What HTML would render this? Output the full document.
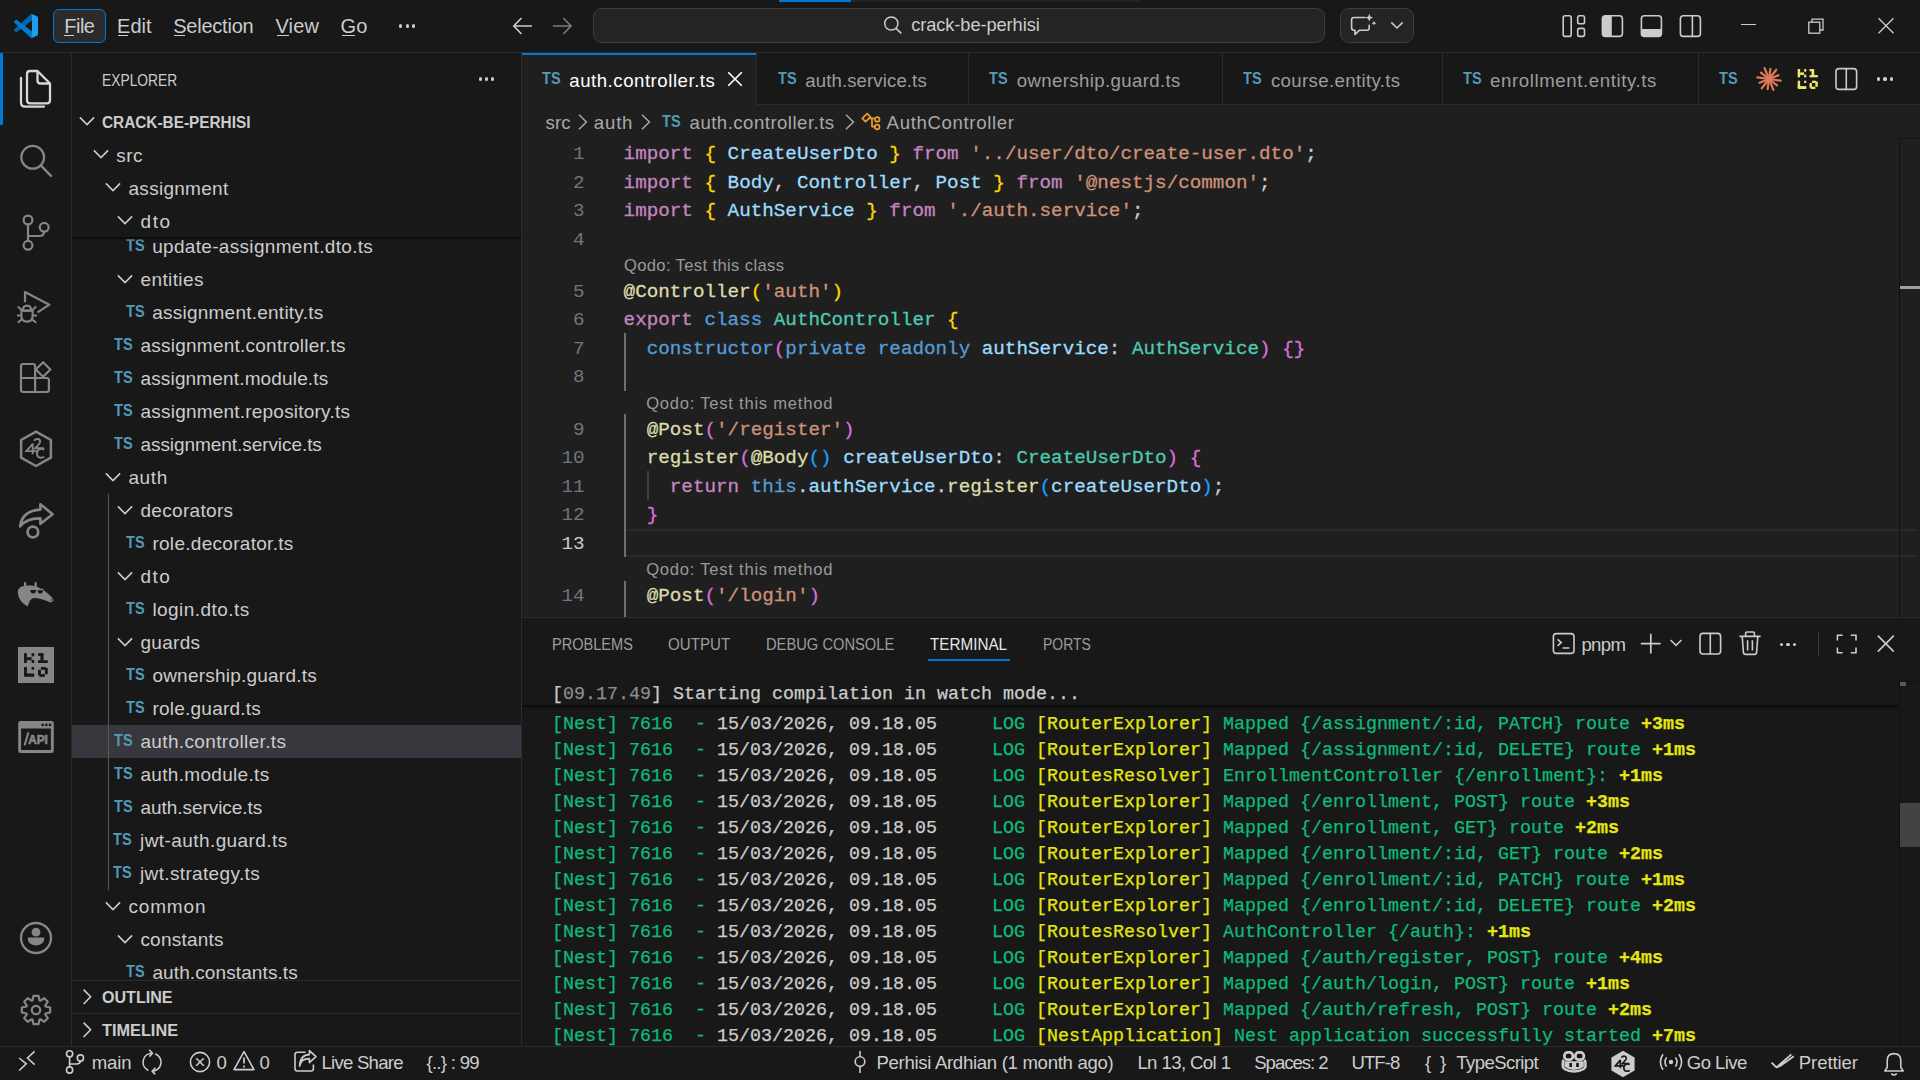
<!DOCTYPE html>
<html><head><meta charset="utf-8"><title>VS Code</title><style>*{margin:0;padding:0;box-sizing:border-box}
html,body{width:1920px;height:1080px;overflow:hidden;background:#181818}
body{position:relative;font-family:"Liberation Sans", sans-serif}
.a{position:absolute;display:block}
.t{position:absolute;white-space:pre;line-height:normal;font-family:"Liberation Sans", sans-serif}
</style></head><body>
<div class="a" style="left:0px;top:0px;width:1920px;height:52px;background:#181818;"></div>
<div class="a" style="left:0px;top:52px;width:1920px;height:1px;background:#2b2b2b;"></div>
<div class="a" style="left:71px;top:53px;width:1px;height:993px;background:#2b2b2b;"></div>
<div class="a" style="left:521px;top:53px;width:1px;height:993px;background:#2b2b2b;"></div>
<div class="a" style="left:522px;top:53px;width:1398px;height:564px;background:#1f1f1f;"></div>
<div class="a" style="left:522px;top:53px;width:1398px;height:52px;background:#181818;"></div>
<div class="a" style="left:522px;top:104px;width:1398px;height:1px;background:#2b2b2b;"></div>
<div class="a" style="left:522px;top:53px;width:234px;height:52px;background:#1f1f1f;"></div>
<div class="a" style="left:522px;top:53px;width:234px;height:2px;background:#0078d4;"></div>
<div class="a" style="left:756px;top:53px;width:1px;height:51px;background:#2b2b2b;"></div>
<div class="a" style="left:968px;top:53px;width:1px;height:51px;background:#2b2b2b;"></div>
<div class="a" style="left:1222px;top:53px;width:1px;height:51px;background:#2b2b2b;"></div>
<div class="a" style="left:1442px;top:53px;width:1px;height:51px;background:#2b2b2b;"></div>
<div class="a" style="left:1698px;top:53px;width:1px;height:51px;background:#2b2b2b;"></div>
<div class="a" style="left:522px;top:617px;width:1398px;height:429px;background:#181818;"></div>
<div class="a" style="left:522px;top:617px;width:1398px;height:1px;background:#2b2b2b;"></div>
<div class="a" style="left:0px;top:1046px;width:1920px;height:34px;background:#181818;"></div>
<div class="a" style="left:0px;top:1046px;width:1920px;height:1px;background:#2b2b2b;"></div>
<div class="a" style="left:0px;top:53px;width:3px;height:72px;background:#0078d4;"></div>
<div class="a" style="left:851px;top:0px;width:289px;height:2px;background:#242424;"></div>
<div class="a" style="left:779px;top:0px;width:72px;height:2px;background:#0078d4;"></div>
<svg class="a" style="left:14px;top:14px;" width="24" height="24" viewBox="0 0 24 24"><g transform="scale(0.24)">
<path d="M96.46 10.8L75.86 0.88C73.47 -0.27 70.62 0.21 68.75 2.08L1.3 63.58C-0.52 65.24 -0.51 68.09 1.3 69.75L6.81 74.75C8.3 76.1 10.53 76.2 12.13 74.99L93.36 13.37C96.09 11.3 100 13.25 100 16.67V16.43C100 14.03 98.62 11.84 96.46 10.8Z" fill="#0065a9"/>
<path d="M96.46 89.2L75.86 99.12C73.47 100.27 70.62 99.79 68.75 97.92L1.3 36.42C-0.52 34.76 -0.51 31.91 1.3 30.25L6.81 25.25C8.3 23.9 10.53 23.8 12.13 25.01L93.36 86.63C96.09 88.7 100 86.75 100 83.33V83.57C100 85.97 98.62 88.16 96.46 89.2Z" fill="#007acc"/>
<path d="M75.86 99.13C73.47 100.27 70.62 99.79 68.75 97.92C71.06 100.22 75 98.59 75 95.33V4.67C75 1.41 71.06 -0.22 68.75 2.08C70.62 0.21 73.47 -0.27 75.86 0.87L96.46 10.78C98.62 11.82 100 14.01 100 16.41V83.59C100 85.99 98.62 88.18 96.46 89.22L75.86 99.13Z" fill="#1f9cf0"/>
</g></svg>
<div class="a" style="left:53px;top:9px;width:53px;height:34px;background:#2b2b2b;border:1.5px solid #0078d4;border-radius:6px;"></div>
<div class="t" style="left:64.3px;top:15.10px;font-size:20px;color:#cccccc;letter-spacing:-0.509px;">File</div>
<div class="t" style="left:117.0px;top:15.10px;font-size:20px;color:#cccccc;letter-spacing:0.058px;">Edit</div>
<div class="t" style="left:173.20000000000002px;top:15.10px;font-size:20px;color:#cccccc;letter-spacing:-0.220px;">Selection</div>
<div class="t" style="left:275.5px;top:15.10px;font-size:20px;color:#cccccc;letter-spacing:0.125px;">View</div>
<div class="t" style="left:340.5px;top:15.10px;font-size:20px;color:#cccccc;letter-spacing:0.256px;">Go</div>
<div class="a" style="left:64.4px;top:34.5px;width:9.5px;height:1.2px;background:#cccccc;"></div>
<div class="a" style="left:118px;top:34.5px;width:9.5px;height:1.2px;background:#cccccc;"></div>
<div class="a" style="left:174.4px;top:34.5px;width:11px;height:1.2px;background:#cccccc;"></div>
<div class="a" style="left:276.7px;top:34.5px;width:12px;height:1.2px;background:#cccccc;"></div>
<div class="a" style="left:341.7px;top:34.5px;width:13px;height:1.2px;background:#cccccc;"></div>
<div class="a" style="left:399.2px;top:24.4px;width:3.2px;height:3.2px;background:#cccccc;border-radius:50%;"></div>
<div class="a" style="left:405.7px;top:24.4px;width:3.2px;height:3.2px;background:#cccccc;border-radius:50%;"></div>
<div class="a" style="left:412.2px;top:24.4px;width:3.2px;height:3.2px;background:#cccccc;border-radius:50%;"></div>
<svg class="a" style="left:510px;top:14px;" width="26" height="24" viewBox="0 0 26 24"><path d="M4.2 12 H22 M11.5 4 L3.8 12 L11.5 20" fill="none" stroke="#cccccc" stroke-width="1.6"/></svg>
<svg class="a" style="left:549px;top:14px;" width="26" height="24" viewBox="0 0 26 24"><path d="M3.8 12 H21.6 M14.3 4 L22 12 L14.3 20" fill="none" stroke="#7a7a7a" stroke-width="1.6"/></svg>
<div class="a" style="left:593px;top:8px;width:732px;height:35px;background:#242424;border:1px solid #3d3d3d;border-radius:9px;"></div>
<svg class="a" style="left:880px;top:12px;" width="26" height="26" viewBox="0 0 26 26"><circle cx="11.3" cy="11.5" r="6.6" fill="none" stroke="#cccccc" stroke-width="1.5"/><path d="M16 16.3 L21.3 21.3" stroke="#cccccc" stroke-width="1.6"/></svg>
<div class="t" style="left:911.2px;top:15.13px;font-size:18.2px;color:#cccccc;letter-spacing:-0.055px;">crack-be-perhisi</div>
<div class="a" style="left:1340px;top:8px;width:74px;height:35px;background:#242424;border:1px solid #3d3d3d;border-radius:9px;"></div>
<svg class="a" style="left:1348px;top:12px;" width="30" height="26" viewBox="0 0 30 26"><path d="M17.5 5.5 H6 Q3.6 5.5 3.6 7.8 V15.8 Q3.6 18.2 6 18.2 H7 V22.5 L11.5 18.2 H19 Q21.2 18.2 21.2 16 V12.8" fill="none" stroke="#cccccc" stroke-width="1.6" stroke-linejoin="round"/>
<path d="M21.2 1.8 L22.3 4.6 L25.1 5.7 L22.3 6.8 L21.2 9.6 L20.1 6.8 L17.3 5.7 L20.1 4.6 Z" fill="#cccccc"/>
<path d="M26 8.8 L26.7 10.5 L28.4 11.2 L26.7 11.9 L26 13.6 L25.3 11.9 L23.6 11.2 L25.3 10.5 Z" fill="#cccccc"/></svg>
<svg class="a" style="left:1388px;top:18px;" width="18" height="14" viewBox="0 0 18 14"><path d="M3.3 4.4 L9 10 L14.7 4.4" fill="none" stroke="#cccccc" stroke-width="1.5"/></svg>
<svg class="a" style="left:1560px;top:13px;" width="28" height="26" viewBox="0 0 28 26"><rect x="3.2" y="2.8" width="8" height="20.6" rx="2" fill="none" stroke="#cccccc" stroke-width="1.6"/><rect x="17.7" y="2.8" width="6.8" height="8" rx="1.8" fill="none" stroke="#cccccc" stroke-width="1.6"/><rect x="17.7" y="15.4" width="6.8" height="8" rx="1.8" fill="none" stroke="#cccccc" stroke-width="1.6"/></svg>
<svg class="a" style="left:1599px;top:13px;" width="28" height="26" viewBox="0 0 28 26"><rect x="3.4" y="2.8" width="20" height="20.6" rx="3" fill="none" stroke="#cccccc" stroke-width="1.6"/><path d="M3.4 5.8 Q3.4 2.8 6.4 2.8 H12.8 V23.4 H6.4 Q3.4 23.4 3.4 20.4 Z" fill="#cccccc"/></svg>
<svg class="a" style="left:1638px;top:13px;" width="28" height="26" viewBox="0 0 28 26"><rect x="3.4" y="2.8" width="20" height="20.6" rx="3" fill="none" stroke="#cccccc" stroke-width="1.6"/><path d="M3.4 16 H23.4 V20.4 Q23.4 23.4 20.4 23.4 H6.4 Q3.4 23.4 3.4 20.4 Z" fill="#cccccc"/></svg>
<svg class="a" style="left:1677px;top:13px;" width="28" height="26" viewBox="0 0 28 26"><rect x="3.4" y="2.8" width="20" height="20.6" rx="3" fill="none" stroke="#cccccc" stroke-width="1.6"/><path d="M15.4 2.8 V23.4" stroke="#cccccc" stroke-width="1.6"/></svg>
<div class="a" style="left:1740.7px;top:24px;width:15.2px;height:1.3px;background:#cccccc;"></div>
<svg class="a" style="left:1806px;top:16px;" width="20" height="19" viewBox="0 0 20 19"><rect x="2.8" y="6.2" width="11" height="11" fill="none" stroke="#cccccc" stroke-width="1.3"/><path d="M6 6.2 V3.2 H17 V14 H13.8" fill="none" stroke="#cccccc" stroke-width="1.3"/></svg>
<svg class="a" style="left:1876px;top:16px;" width="20" height="19" viewBox="0 0 20 19"><path d="M2.5 2.3 L17.5 17.3 M17.5 2.3 L2.5 17.3" stroke="#cccccc" stroke-width="1.3"/></svg>
<svg class="a" style="left:16px;top:66px;" width="40" height="46" viewBox="0 0 40 46"><path d="M14 5 H21.5 L34 17.5 V34.3 Q34 37.3 31 37.3 H14 Q11 37.3 11 34.3 V8 Q11 5 14 5 Z" fill="none" stroke="#d7d7d7" stroke-width="2.3" stroke-linejoin="round"/>
<path d="M21.5 5 V14.5 Q21.5 17.5 24.5 17.5 H34" fill="none" stroke="#d7d7d7" stroke-width="2.3" stroke-linejoin="round"/>
<path d="M5 12 V36.4 Q5 40.6 9.2 40.6 H28" fill="none" stroke="#d7d7d7" stroke-width="2.3" stroke-linecap="round"/></svg>
<svg class="a" style="left:16px;top:140px;" width="40" height="42" viewBox="0 0 40 42"><circle cx="16.7" cy="17.3" r="11.4" fill="none" stroke="#868686" stroke-width="2.2"/><path d="M25 25.6 L35 35.8" stroke="#868686" stroke-width="2.4" stroke-linecap="round"/></svg>
<svg class="a" style="left:16px;top:210px;" width="40" height="44" viewBox="0 0 40 44"><circle cx="12" cy="10" r="4.4" fill="none" stroke="#868686" stroke-width="2.2"/>
<circle cx="28.2" cy="17.3" r="4.4" fill="none" stroke="#868686" stroke-width="2.2"/>
<circle cx="12" cy="35.3" r="4.4" fill="none" stroke="#868686" stroke-width="2.2"/>
<path d="M12 14.4 V30.9 M12 26 H23.6 Q28 26 28 21.7" fill="none" stroke="#868686" stroke-width="2.2"/></svg>
<svg class="a" style="left:14px;top:284px;" width="42" height="44" viewBox="0 0 42 44"><path d="M11 18.2 V8 L35.3 20.7 L23.6 28.4" fill="none" stroke="#868686" stroke-width="2.2" stroke-linejoin="round"/>
<path d="M8.8 26.6 Q8.8 21.6 13 21.6 Q17.2 21.6 17.2 26.6 Z" fill="none" stroke="#868686" stroke-width="2.1" stroke-linejoin="round"/>
<path d="M7.4 26.8 H18.6 V31.4 Q18.6 37.6 13 37.6 Q7.4 37.6 7.4 31.4 Z" fill="none" stroke="#868686" stroke-width="2.1"/>
<path d="M3.8 22.6 L7.6 26 M22.2 22.6 L18.4 26 M3 31.4 H7.4 M23 31.4 H18.6 M3.8 38.8 L7.6 35.4 M22.2 38.8 L18.4 35.4" fill="none" stroke="#868686" stroke-width="2"/></svg>
<svg class="a" style="left:16px;top:356px;" width="40" height="42" viewBox="0 0 40 42"><path d="M5 10.2 Q5 8 7.2 8 H16.9 Q19.1 8 19.1 10.2 V22 H30.7 Q32.9 22 32.9 24.2 V33.8 Q32.9 36 30.7 36 H7.2 Q5 36 5 33.8 Z M5 22 H19.1 V36" fill="none" stroke="#868686" stroke-width="2.2" stroke-linejoin="round"/>
<path d="M27.1 6.2 L34.4 13.5 L27.1 20.8 L19.8 13.5 Z" fill="none" stroke="#868686" stroke-width="2.2" stroke-linejoin="round"/></svg>
<svg class="a" style="left:16px;top:428px;" width="40" height="42" viewBox="0 0 40 42"><path d="M20 3.6 L34.9 12 V29.6 L20 38 L5.1 29.6 V12 Z" fill="none" stroke="#868686" stroke-width="2.5" stroke-linejoin="round"/>
<path d="M16.9 15.6 L10.4 23.1 H20.9 M16.7 15.6 V26.2" fill="none" stroke="#868686" stroke-width="1.9"/>
<path d="M18 12.8 Q19.6 10.6 22 11 Q24.6 11.6 24 14.2 Q23.4 16 19.2 20.2 H28" fill="none" stroke="#868686" stroke-width="1.9"/>
<path d="M28.2 21.6 Q26.2 20.2 23.8 21 Q20.8 22.4 21 25.8 Q21.2 29.6 24.6 29.8 Q26.8 29.9 28.2 28.6" fill="none" stroke="#868686" stroke-width="1.9"/></svg>
<svg class="a" style="left:14px;top:498px;" width="44" height="44" viewBox="0 0 44 44"><path d="M6 28.4 Q8.4 12.4 26.4 11.6 V6.2 L38.6 16.2 L26.4 25.8 V20.4 Q12.6 20 6 28.4 Z" fill="none" stroke="#868686" stroke-width="2.6" stroke-linejoin="round"/>
<circle cx="18.9" cy="34" r="5.3" fill="none" stroke="#868686" stroke-width="2.8"/></svg>
<svg class="a" style="left:14px;top:578px;" width="44" height="38" viewBox="0 0 44 38"><path d="M4.7 10.7 Q7 7.6 14.9 7.6 Q22 7.2 26.4 10.7 L30 12.4 Q35 16 38 19.6 L39.8 22.7 L36.7 24.4 Q30 21.5 24.7 20.4 Q20 19.6 18.4 20.4 Q16 21.4 15.8 23.1 L13.6 28.4 Q9 26 6.9 23.1 Q3.8 18.6 3.8 14.2 Q3.8 11.8 4.7 10.7 Z" fill="#868686"/>
<rect x="10" y="4" width="2.2" height="5" rx="1" fill="#868686"/><rect x="20.6" y="4" width="2.2" height="5" rx="1" fill="#868686"/>
<path d="M16.2 11.8 H22.2 Q22 15.4 19.2 15.4 Q16.4 15.4 16.2 11.8 Z M23.6 12.2 H29 Q28.8 15.6 26.3 15.6 Q23.8 15.6 23.6 12.2 Z" fill="#181818"/>
<path d="M15.2 11.3 H29.4" stroke="#868686" stroke-width="1.2"/>
<path d="M36.6 21.6 L38.6 21.4 L37.8 23.2 Z" fill="#181818"/></svg>
<svg class="a" style="left:18px;top:647px;" width="36" height="36" viewBox="0 0 36 36"><rect x="0" y="0" width="36" height="36" fill="#868686"/><rect x="6.00" y="6.20" width="2.90" height="9.80" fill="#181818"/><rect x="8.90" y="10.20" width="4.70" height="3.10" fill="#181818"/><rect x="13.60" y="6.20" width="2.60" height="3.10" fill="#181818"/><rect x="13.60" y="12.90" width="2.60" height="3.10" fill="#181818"/><rect x="20.00" y="6.20" width="5.10" height="2.70" fill="#181818"/><rect x="22.40" y="6.20" width="3.20" height="8.90" fill="#181818"/><rect x="20.00" y="13.30" width="9.80" height="2.70" fill="#181818"/><rect x="6.00" y="20.00" width="2.90" height="8.40" fill="#181818"/><rect x="7.40" y="26.40" width="8.80" height="3.40" fill="#181818"/><rect x="13.60" y="20.00" width="2.60" height="2.70" fill="#181818"/><rect x="22.90" y="20.00" width="5.00" height="2.70" fill="#181818"/><rect x="26.90" y="21.00" width="2.90" height="6.20" fill="#181818"/><rect x="20.00" y="22.70" width="2.90" height="5.60" fill="#181818"/><rect x="21.40" y="27.10" width="5.50" height="2.70" fill="#181818"/><rect x="6.00" y="26.40" width="3.40" height="3.40" rx="1.60" fill="#181818"/></svg>
<svg class="a" style="left:16px;top:718px;" width="40" height="40" viewBox="0 0 40 40"><path d="M4.6 3.1 H35.4 Q37.8 3.1 37.8 5.5 V32.7 Q37.8 35.1 35.4 35.1 H4.6 Q2.2 35.1 2.2 32.7 V5.5 Q2.2 3.1 4.6 3.1 Z M5.1 10.6 V32 H34.9 V10.6 Z" fill="#868686" fill-rule="evenodd"/>
<circle cx="26.7" cy="6.9" r="1.3" fill="#181818"/><circle cx="30.3" cy="6.9" r="1.3" fill="#181818"/><circle cx="34" cy="6.9" r="1.3" fill="#181818"/>
<path d="M8.6 27.4 L12.4 14.4" stroke="#868686" stroke-width="2"/>
<text x="12.2" y="25.9" font-family="Liberation Sans" font-weight="bold" font-size="12.2" textLength="19.6" lengthAdjust="spacingAndGlyphs" fill="#868686" stroke="#868686" stroke-width="0.7">API</text></svg>
<svg class="a" style="left:16px;top:918px;" width="40" height="40" viewBox="0 0 40 40"><circle cx="20" cy="20" r="15" fill="none" stroke="#868686" stroke-width="2.3"/>
<circle cx="20" cy="14.2" r="4.4" fill="#868686"/><path d="M11.6 19.6 H28.4 Q28.4 27.4 20 27.4 Q11.6 27.4 11.6 19.6 Z" fill="#868686"/></svg>
<svg class="a" style="left:16px;top:990px;" width="40" height="40" viewBox="0 0 40 40"><path d="M34.18 17.50 L34.18 22.50 L29.58 23.49 L29.24 24.31 L31.80 28.26 L28.26 31.80 L24.31 29.24 L23.49 29.58 L22.50 34.18 L17.50 34.18 L16.51 29.58 L15.69 29.24 L11.74 31.80 L8.20 28.26 L10.76 24.31 L10.42 23.49 L5.82 22.50 L5.82 17.50 L10.42 16.51 L10.76 15.69 L8.20 11.74 L11.74 8.20 L15.69 10.76 L16.51 10.42 L17.50 5.82 L22.50 5.82 L23.49 10.42 L24.31 10.76 L28.26 8.20 L31.80 11.74 L29.24 15.69 L29.58 16.51 Z" fill="none" stroke="#868686" stroke-width="2.2" stroke-linejoin="round"/><circle cx="20" cy="20" r="4.2" fill="none" stroke="#868686" stroke-width="2.2"/></svg>
<div class="t" style="left:102.4px;top:70.60px;font-size:16.8px;color:#cccccc;transform:scaleX(0.8227);transform-origin:0 0;">EXPLORER</div>
<div class="a" style="left:478.79999999999995px;top:77.4px;width:3.2px;height:3.2px;background:#cccccc;border-radius:50%;"></div>
<div class="a" style="left:484.9px;top:77.4px;width:3.2px;height:3.2px;background:#cccccc;border-radius:50%;"></div>
<div class="a" style="left:491.0px;top:77.4px;width:3.2px;height:3.2px;background:#cccccc;border-radius:50%;"></div>
<svg class="a" style="left:78.2px;top:115px;" width="18" height="13" viewBox="0 0 18 13"><path d="M1.9 2.4 L9 9.5 L16.1 2.4" fill="none" stroke="#cccccc" stroke-width="1.6"/></svg>
<div class="t" style="left:102.2px;top:112.80px;font-size:16.8px;color:#cccccc;font-weight:700;transform:scaleX(0.9153);transform-origin:0 0;">CRACK-BE-PERHISI</div>
<svg class="a" style="left:91.7px;top:148px;" width="18" height="13" viewBox="0 0 18 13"><path d="M1.9 2.4 L9 9.5 L16.1 2.4" fill="none" stroke="#cccccc" stroke-width="1.6"/></svg>
<div class="t" style="left:116.2px;top:144.81px;font-size:19px;color:#cccccc;letter-spacing:0.491px;">src</div>
<svg class="a" style="left:104.0px;top:181px;" width="18" height="13" viewBox="0 0 18 13"><path d="M1.9 2.4 L9 9.5 L16.1 2.4" fill="none" stroke="#cccccc" stroke-width="1.6"/></svg>
<div class="t" style="left:128.5px;top:177.81px;font-size:19px;color:#cccccc;letter-spacing:0.283px;">assignment</div>
<svg class="a" style="left:116.1px;top:214px;" width="18" height="13" viewBox="0 0 18 13"><path d="M1.9 2.4 L9 9.5 L16.1 2.4" fill="none" stroke="#cccccc" stroke-width="1.6"/></svg>
<div class="t" style="left:140.6px;top:210.81px;font-size:19px;color:#cccccc;letter-spacing:1.526px;">dto</div>
<div class="a" style="left:72px;top:725px;width:449px;height:33px;background:#37373d;"></div>
<div class="a" style="left:108px;top:494px;width:1px;height:396px;background:#585858;"></div>
<div class="a" style="left:72px;top:237px;width:449px;height:743px;overflow:hidden">
<div class="t" style="left:53.50px;top:0.42px;font-size:16px;color:#519aba;font-weight:700;transform:scaleX(0.9094);transform-origin:0 0;">TS</div>
<div class="t" style="left:80.20px;top:-0.59px;font-size:19px;color:#cccccc;letter-spacing:0.318px;">update-assignment.dto.ts</div>
<svg class="a" style="left:44.00px;top:36.00px;" width="18" height="13" viewBox="0 0 18 13"><path d="M1.9 2.4 L9 9.5 L16.1 2.4" fill="none" stroke="#cccccc" stroke-width="1.6"/></svg>
<div class="t" style="left:68.50px;top:32.41px;font-size:19px;color:#cccccc;letter-spacing:0.387px;">entities</div>
<div class="t" style="left:53.50px;top:66.42px;font-size:16px;color:#519aba;font-weight:700;transform:scaleX(0.9094);transform-origin:0 0;">TS</div>
<div class="t" style="left:80.20px;top:65.41px;font-size:19px;color:#cccccc;letter-spacing:0.239px;">assignment.entity.ts</div>
<div class="t" style="left:41.80px;top:99.42px;font-size:16px;color:#519aba;font-weight:700;transform:scaleX(0.9094);transform-origin:0 0;">TS</div>
<div class="t" style="left:68.50px;top:98.41px;font-size:19px;color:#cccccc;letter-spacing:0.238px;">assignment.controller.ts</div>
<div class="t" style="left:41.80px;top:132.42px;font-size:16px;color:#519aba;font-weight:700;transform:scaleX(0.9094);transform-origin:0 0;">TS</div>
<div class="t" style="left:68.50px;top:131.41px;font-size:19px;color:#cccccc;letter-spacing:0.154px;">assignment.module.ts</div>
<div class="t" style="left:41.80px;top:165.42px;font-size:16px;color:#519aba;font-weight:700;transform:scaleX(0.9094);transform-origin:0 0;">TS</div>
<div class="t" style="left:68.50px;top:164.41px;font-size:19px;color:#cccccc;letter-spacing:0.212px;">assignment.repository.ts</div>
<div class="t" style="left:41.80px;top:198.42px;font-size:16px;color:#519aba;font-weight:700;transform:scaleX(0.9094);transform-origin:0 0;">TS</div>
<div class="t" style="left:68.50px;top:197.41px;font-size:19px;color:#cccccc;letter-spacing:-0.066px;">assignment.service.ts</div>
<svg class="a" style="left:31.90px;top:234.00px;" width="18" height="13" viewBox="0 0 18 13"><path d="M1.9 2.4 L9 9.5 L16.1 2.4" fill="none" stroke="#cccccc" stroke-width="1.6"/></svg>
<div class="t" style="left:56.40px;top:230.41px;font-size:19px;color:#cccccc;letter-spacing:0.629px;">auth</div>
<svg class="a" style="left:43.90px;top:267.00px;" width="18" height="13" viewBox="0 0 18 13"><path d="M1.9 2.4 L9 9.5 L16.1 2.4" fill="none" stroke="#cccccc" stroke-width="1.6"/></svg>
<div class="t" style="left:68.40px;top:263.41px;font-size:19px;color:#cccccc;letter-spacing:0.322px;">decorators</div>
<div class="t" style="left:53.70px;top:297.42px;font-size:16px;color:#519aba;font-weight:700;transform:scaleX(0.9094);transform-origin:0 0;">TS</div>
<div class="t" style="left:80.40px;top:296.40px;font-size:19px;color:#cccccc;letter-spacing:0.291px;">role.decorator.ts</div>
<svg class="a" style="left:43.90px;top:333.00px;" width="18" height="13" viewBox="0 0 18 13"><path d="M1.9 2.4 L9 9.5 L16.1 2.4" fill="none" stroke="#cccccc" stroke-width="1.6"/></svg>
<div class="t" style="left:68.40px;top:329.40px;font-size:19px;color:#cccccc;letter-spacing:1.493px;">dto</div>
<div class="t" style="left:53.70px;top:363.42px;font-size:16px;color:#519aba;font-weight:700;transform:scaleX(0.9094);transform-origin:0 0;">TS</div>
<div class="t" style="left:80.40px;top:362.40px;font-size:19px;color:#cccccc;letter-spacing:0.458px;">login.dto.ts</div>
<svg class="a" style="left:43.90px;top:399.00px;" width="18" height="13" viewBox="0 0 18 13"><path d="M1.9 2.4 L9 9.5 L16.1 2.4" fill="none" stroke="#cccccc" stroke-width="1.6"/></svg>
<div class="t" style="left:68.40px;top:395.40px;font-size:19px;color:#cccccc;letter-spacing:0.315px;">guards</div>
<div class="t" style="left:53.70px;top:429.42px;font-size:16px;color:#519aba;font-weight:700;transform:scaleX(0.9094);transform-origin:0 0;">TS</div>
<div class="t" style="left:80.40px;top:428.40px;font-size:19px;color:#cccccc;letter-spacing:0.220px;">ownership.guard.ts</div>
<div class="t" style="left:53.70px;top:462.42px;font-size:16px;color:#519aba;font-weight:700;transform:scaleX(0.9094);transform-origin:0 0;">TS</div>
<div class="t" style="left:80.40px;top:461.40px;font-size:19px;color:#cccccc;letter-spacing:0.237px;">role.guard.ts</div>
<div class="t" style="left:41.70px;top:495.42px;font-size:16px;color:#519aba;font-weight:700;transform:scaleX(0.9094);transform-origin:0 0;">TS</div>
<div class="t" style="left:68.40px;top:494.40px;font-size:19px;color:#cccccc;letter-spacing:0.365px;">auth.controller.ts</div>
<div class="t" style="left:41.70px;top:528.42px;font-size:16px;color:#519aba;font-weight:700;transform:scaleX(0.9094);transform-origin:0 0;">TS</div>
<div class="t" style="left:68.40px;top:527.40px;font-size:19px;color:#cccccc;letter-spacing:0.319px;">auth.module.ts</div>
<div class="t" style="left:41.70px;top:561.42px;font-size:16px;color:#519aba;font-weight:700;transform:scaleX(0.9094);transform-origin:0 0;">TS</div>
<div class="t" style="left:68.40px;top:560.40px;font-size:19px;color:#cccccc;letter-spacing:-0.040px;">auth.service.ts</div>
<div class="t" style="left:41.30px;top:594.42px;font-size:16px;color:#519aba;font-weight:700;transform:scaleX(0.9094);transform-origin:0 0;">TS</div>
<div class="t" style="left:68.00px;top:593.40px;font-size:19px;color:#cccccc;letter-spacing:0.425px;">jwt-auth.guard.ts</div>
<div class="t" style="left:41.30px;top:627.42px;font-size:16px;color:#519aba;font-weight:700;transform:scaleX(0.9094);transform-origin:0 0;">TS</div>
<div class="t" style="left:68.00px;top:626.40px;font-size:19px;color:#cccccc;letter-spacing:0.351px;">jwt.strategy.ts</div>
<svg class="a" style="left:31.90px;top:663.00px;" width="18" height="13" viewBox="0 0 18 13"><path d="M1.9 2.4 L9 9.5 L16.1 2.4" fill="none" stroke="#cccccc" stroke-width="1.6"/></svg>
<div class="t" style="left:56.40px;top:659.40px;font-size:19px;color:#cccccc;letter-spacing:0.857px;">common</div>
<svg class="a" style="left:43.90px;top:696.00px;" width="18" height="13" viewBox="0 0 18 13"><path d="M1.9 2.4 L9 9.5 L16.1 2.4" fill="none" stroke="#cccccc" stroke-width="1.6"/></svg>
<div class="t" style="left:68.40px;top:692.40px;font-size:19px;color:#cccccc;letter-spacing:0.230px;">constants</div>
<div class="t" style="left:53.70px;top:726.42px;font-size:16px;color:#519aba;font-weight:700;transform:scaleX(0.9094);transform-origin:0 0;">TS</div>
<div class="t" style="left:80.40px;top:725.40px;font-size:19px;color:#cccccc;letter-spacing:0.108px;">auth.constants.ts</div>
</div>
<div class="a" style="left:72px;top:237px;width:449px;height:4px;background:linear-gradient(#0a0a0a,rgba(0,0,0,0));"></div>
<div class="a" style="left:72px;top:980px;width:449px;height:1px;background:#2b2b2b;"></div>
<div class="a" style="left:72px;top:1013px;width:449px;height:1px;background:#2b2b2b;"></div>
<svg class="a" style="left:81px;top:987px;" width="13" height="20" viewBox="0 0 13 20"><path d="M2.6 2.6 L9.6 9.8 L2.6 17" fill="none" stroke="#cccccc" stroke-width="1.6"/></svg>
<div class="t" style="left:102px;top:987.80px;font-size:16.8px;color:#cccccc;font-weight:700;transform:scaleX(0.9571);transform-origin:0 0;">OUTLINE</div>
<svg class="a" style="left:81px;top:1020px;" width="13" height="20" viewBox="0 0 13 20"><path d="M2.6 2.6 L9.6 9.8 L2.6 17" fill="none" stroke="#cccccc" stroke-width="1.6"/></svg>
<div class="t" style="left:102px;top:1020.80px;font-size:16.8px;color:#cccccc;font-weight:700;transform:scaleX(0.9705);transform-origin:0 0;">TIMELINE</div>
<div class="t" style="left:541.7px;top:70.42px;font-size:16px;color:#519aba;font-weight:700;transform:scaleX(0.9094);transform-origin:0 0;">TS</div>
<div class="t" style="left:569.25px;top:69.77px;font-size:18.6px;color:#ffffff;letter-spacing:0.540px;">auth.controller.ts</div>
<div class="t" style="left:777.6px;top:70.42px;font-size:16px;color:#519aba;font-weight:700;transform:scaleX(0.9094);transform-origin:0 0;">TS</div>
<div class="t" style="left:805.25px;top:69.77px;font-size:18.6px;color:#9d9d9d;letter-spacing:0.111px;">auth.service.ts</div>
<div class="t" style="left:989.0px;top:70.42px;font-size:16px;color:#519aba;font-weight:700;transform:scaleX(0.9094);transform-origin:0 0;">TS</div>
<div class="t" style="left:1016.75px;top:69.77px;font-size:18.6px;color:#9d9d9d;letter-spacing:0.383px;">ownership.guard.ts</div>
<div class="t" style="left:1242.8999999999999px;top:70.42px;font-size:16px;color:#519aba;font-weight:700;transform:scaleX(0.9094);transform-origin:0 0;">TS</div>
<div class="t" style="left:1270.9px;top:69.77px;font-size:18.6px;color:#9d9d9d;letter-spacing:0.371px;">course.entity.ts</div>
<div class="t" style="left:1462.6px;top:70.42px;font-size:16px;color:#519aba;font-weight:700;transform:scaleX(0.9094);transform-origin:0 0;">TS</div>
<div class="t" style="left:1490px;top:69.77px;font-size:18.6px;color:#9d9d9d;letter-spacing:0.616px;">enrollment.entity.ts</div>
<svg class="a" style="left:726px;top:70px;" width="18" height="18" viewBox="0 0 18 18"><path d="M2.2 2.2 L15.8 15.8 M15.8 2.2 L2.2 15.8" stroke="#ffffff" stroke-width="1.6"/></svg>
<div class="t" style="left:1719.3px;top:70.42px;font-size:16px;color:#519aba;font-weight:700;transform:scaleX(0.9094);transform-origin:0 0;">TS</div>
<svg class="a" style="left:1756px;top:66px;" width="26" height="26" viewBox="0 0 26 26"><path d="M13 13 L24.69 14.64" stroke="#e07a5a" stroke-width="2.2" stroke-linecap="round"/><path d="M13 13 L21.04 19.28" stroke="#e07a5a" stroke-width="2.2" stroke-linecap="round"/><path d="M13 13 L17.42 23.94" stroke="#e07a5a" stroke-width="2.2" stroke-linecap="round"/><path d="M13 13 L11.58 23.10" stroke="#e07a5a" stroke-width="2.2" stroke-linecap="round"/><path d="M13 13 L5.74 22.30" stroke="#e07a5a" stroke-width="2.2" stroke-linecap="round"/><path d="M13 13 L3.54 16.82" stroke="#e07a5a" stroke-width="2.2" stroke-linecap="round"/><path d="M13 13 L1.31 11.36" stroke="#e07a5a" stroke-width="2.2" stroke-linecap="round"/><path d="M13 13 L4.96 6.72" stroke="#e07a5a" stroke-width="2.2" stroke-linecap="round"/><path d="M13 13 L8.58 2.06" stroke="#e07a5a" stroke-width="2.2" stroke-linecap="round"/><path d="M13 13 L14.42 2.90" stroke="#e07a5a" stroke-width="2.2" stroke-linecap="round"/><path d="M13 13 L20.26 3.70" stroke="#e07a5a" stroke-width="2.2" stroke-linecap="round"/><path d="M13 13 L22.46 9.18" stroke="#e07a5a" stroke-width="2.2" stroke-linecap="round"/></svg>
<svg class="a" style="left:1790px;top:62px;" width="30" height="30" viewBox="0 0 30 30"><rect x="7.67" y="7.04" width="2.45" height="8.28" fill="#f0e86a"/><rect x="10.12" y="10.42" width="3.97" height="2.62" fill="#f0e86a"/><rect x="14.09" y="7.04" width="2.20" height="2.62" fill="#f0e86a"/><rect x="14.09" y="12.70" width="2.20" height="2.62" fill="#f0e86a"/><rect x="19.50" y="7.04" width="4.31" height="2.28" fill="#f0e86a"/><rect x="21.53" y="7.04" width="2.70" height="7.52" fill="#f0e86a"/><rect x="19.50" y="13.04" width="8.28" height="2.28" fill="#f0e86a"/><rect x="7.67" y="18.70" width="2.45" height="7.10" fill="#f0e86a"/><rect x="8.85" y="24.11" width="7.44" height="2.87" fill="#f0e86a"/><rect x="14.09" y="18.70" width="2.20" height="2.28" fill="#f0e86a"/><rect x="21.95" y="18.70" width="4.22" height="2.28" fill="#f0e86a"/><rect x="25.33" y="19.55" width="2.45" height="5.24" fill="#f0e86a"/><rect x="19.50" y="20.98" width="2.45" height="4.73" fill="#f0e86a"/><rect x="20.68" y="24.70" width="4.65" height="2.28" fill="#f0e86a"/><rect x="7.67" y="24.11" width="2.87" height="2.87" rx="1.35" fill="#f0e86a"/></svg>
<svg class="a" style="left:1833px;top:66px;" width="26" height="26" viewBox="0 0 26 26"><rect x="3" y="2.6" width="20.6" height="20.8" rx="3" fill="none" stroke="#cccccc" stroke-width="1.6"/><path d="M13.3 2.6 V23.4" stroke="#cccccc" stroke-width="1.6"/></svg>
<div class="a" style="left:1876.9px;top:77.4px;width:3.2px;height:3.2px;background:#cccccc;border-radius:50%;"></div>
<div class="a" style="left:1883.4px;top:77.4px;width:3.2px;height:3.2px;background:#cccccc;border-radius:50%;"></div>
<div class="a" style="left:1889.9px;top:77.4px;width:3.2px;height:3.2px;background:#cccccc;border-radius:50%;"></div>
<div class="t" style="left:545.4px;top:111.87px;font-size:18.6px;color:#a9a9a9;letter-spacing:0.201px;">src</div>
<svg class="a" style="left:575px;top:112px;" width="16" height="20" viewBox="0 0 16 20"><path d="M4 2.8 L11.4 10 L4 17.2" fill="none" stroke="#a9a9a9" stroke-width="1.5"/></svg>
<div class="t" style="left:593.8px;top:111.87px;font-size:18.6px;color:#a9a9a9;letter-spacing:0.824px;">auth</div>
<svg class="a" style="left:637.5px;top:112px;" width="16" height="20" viewBox="0 0 16 20"><path d="M4 2.8 L11.4 10 L4 17.2" fill="none" stroke="#a9a9a9" stroke-width="1.5"/></svg>
<div class="t" style="left:662.1px;top:112.92px;font-size:16px;color:#519aba;font-weight:700;transform:scaleX(0.9094);transform-origin:0 0;">TS</div>
<div class="t" style="left:689.6px;top:111.87px;font-size:18.6px;color:#a9a9a9;letter-spacing:0.476px;">auth.controller.ts</div>
<svg class="a" style="left:841.5px;top:112px;" width="16" height="20" viewBox="0 0 16 20"><path d="M4 2.8 L11.4 10 L4 17.2" fill="none" stroke="#a9a9a9" stroke-width="1.5"/></svg>
<svg class="a" style="left:858px;top:111px;" width="26" height="22" viewBox="0 0 26 22"><path d="M4.2 7.4 L9.2 2.6 L12.4 5.8 L7.6 10.6 Z M10.8 7.4 H16.4 M14 7.4 V15.6 H17.2" fill="none" stroke="#ee9d28" stroke-width="1.7" stroke-linejoin="round"/><circle cx="19.2" cy="8.4" r="2.3" fill="none" stroke="#ee9d28" stroke-width="1.7"/><circle cx="19.2" cy="16" r="2.3" fill="none" stroke="#ee9d28" stroke-width="1.7"/></svg>
<div class="t" style="left:886.6px;top:111.87px;font-size:18.6px;color:#a9a9a9;letter-spacing:0.653px;">AuthController</div>
<div class="a" style="left:626px;top:528.8px;width:1291px;height:28px;border-top:2px solid #292929;border-bottom:2px solid #292929;"></div>
<div class="a" style="left:624px;top:333px;width:2px;height:57.5px;background:#6e6e6e;"></div>
<div class="a" style="left:624px;top:414px;width:2px;height:143px;background:#6e6e6e;"></div>
<div class="a" style="left:624px;top:581px;width:2px;height:36px;background:#6e6e6e;"></div>
<div class="a" style="left:647px;top:471px;width:2px;height:28.5px;background:#404040;"></div>
<div class="a" style="left:1899px;top:138px;width:1px;height:479px;background:#121212;"></div>
<div class="a" style="left:1899px;top:138px;width:21px;height:1px;background:#121212;"></div>
<div class="a" style="left:1900px;top:285.5px;width:20px;height:3px;background:#a0a0a0;"></div>
<div class="t" style="left:572.95px;top:143.17px;font-size:19.25px;color:#6e7681;font-family:'Liberation Mono', monospace;">1</div>
<div class="t" style="left:623.6px;top:143.17px;font-size:19.25px;font-family:'Liberation Mono', monospace;-webkit-text-stroke:0.3px currentColor;"><span style="color:#c586c0">import</span><span style="color:#cccccc"> </span><span style="color:#ffd700">{</span><span style="color:#cccccc"> </span><span style="color:#9cdcfe">CreateUserDto</span><span style="color:#cccccc"> </span><span style="color:#ffd700">}</span><span style="color:#cccccc"> </span><span style="color:#c586c0">from</span><span style="color:#cccccc"> </span><span style="color:#ce9178">&#x27;../user/dto/create-user.dto&#x27;</span><span style="color:#cccccc">;</span></div>
<div class="t" style="left:572.95px;top:171.67px;font-size:19.25px;color:#6e7681;font-family:'Liberation Mono', monospace;">2</div>
<div class="t" style="left:623.6px;top:171.67px;font-size:19.25px;font-family:'Liberation Mono', monospace;-webkit-text-stroke:0.3px currentColor;"><span style="color:#c586c0">import</span><span style="color:#cccccc"> </span><span style="color:#ffd700">{</span><span style="color:#cccccc"> </span><span style="color:#9cdcfe">Body</span><span style="color:#cccccc">, </span><span style="color:#9cdcfe">Controller</span><span style="color:#cccccc">, </span><span style="color:#9cdcfe">Post</span><span style="color:#cccccc"> </span><span style="color:#ffd700">}</span><span style="color:#cccccc"> </span><span style="color:#c586c0">from</span><span style="color:#cccccc"> </span><span style="color:#ce9178">&#x27;@nestjs/common&#x27;</span><span style="color:#cccccc">;</span></div>
<div class="t" style="left:572.95px;top:200.17px;font-size:19.25px;color:#6e7681;font-family:'Liberation Mono', monospace;">3</div>
<div class="t" style="left:623.6px;top:200.17px;font-size:19.25px;font-family:'Liberation Mono', monospace;-webkit-text-stroke:0.3px currentColor;"><span style="color:#c586c0">import</span><span style="color:#cccccc"> </span><span style="color:#ffd700">{</span><span style="color:#cccccc"> </span><span style="color:#9cdcfe">AuthService</span><span style="color:#cccccc"> </span><span style="color:#ffd700">}</span><span style="color:#cccccc"> </span><span style="color:#c586c0">from</span><span style="color:#cccccc"> </span><span style="color:#ce9178">&#x27;./auth.service&#x27;</span><span style="color:#cccccc">;</span></div>
<div class="t" style="left:572.95px;top:228.67px;font-size:19.25px;color:#6e7681;font-family:'Liberation Mono', monospace;">4</div>
<div class="t" style="left:623.9000000000001px;top:256.18px;font-size:16.6px;color:#999999;letter-spacing:0.367px;">Qodo: Test this class</div>
<div class="t" style="left:572.95px;top:280.87px;font-size:19.25px;color:#6e7681;font-family:'Liberation Mono', monospace;">5</div>
<div class="t" style="left:623.6px;top:280.87px;font-size:19.25px;font-family:'Liberation Mono', monospace;-webkit-text-stroke:0.3px currentColor;"><span style="color:#dcdcaa">@Controller</span><span style="color:#ffd700">(</span><span style="color:#ce9178">&#x27;auth&#x27;</span><span style="color:#ffd700">)</span></div>
<div class="t" style="left:572.95px;top:309.37px;font-size:19.25px;color:#6e7681;font-family:'Liberation Mono', monospace;">6</div>
<div class="t" style="left:623.6px;top:309.37px;font-size:19.25px;font-family:'Liberation Mono', monospace;-webkit-text-stroke:0.3px currentColor;"><span style="color:#c586c0">export</span><span style="color:#cccccc"> </span><span style="color:#569cd6">class</span><span style="color:#cccccc"> </span><span style="color:#4ec9b0">AuthController</span><span style="color:#cccccc"> </span><span style="color:#ffd700">{</span></div>
<div class="t" style="left:572.95px;top:337.87px;font-size:19.25px;color:#6e7681;font-family:'Liberation Mono', monospace;">7</div>
<div class="t" style="left:623.6px;top:337.87px;font-size:19.25px;font-family:'Liberation Mono', monospace;-webkit-text-stroke:0.3px currentColor;"><span style="color:#cccccc">  </span><span style="color:#569cd6">constructor</span><span style="color:#da70d6">(</span><span style="color:#569cd6">private</span><span style="color:#cccccc"> </span><span style="color:#569cd6">readonly</span><span style="color:#cccccc"> </span><span style="color:#9cdcfe">authService</span><span style="color:#cccccc">: </span><span style="color:#4ec9b0">AuthService</span><span style="color:#da70d6">)</span><span style="color:#cccccc"> </span><span style="color:#da70d6">{}</span></div>
<div class="t" style="left:572.95px;top:366.37px;font-size:19.25px;color:#6e7681;font-family:'Liberation Mono', monospace;">8</div>
<div class="t" style="left:646.2px;top:393.88px;font-size:16.6px;color:#999999;letter-spacing:0.757px;">Qodo: Test this method</div>
<div class="t" style="left:572.95px;top:418.57px;font-size:19.25px;color:#6e7681;font-family:'Liberation Mono', monospace;">9</div>
<div class="t" style="left:623.6px;top:418.57px;font-size:19.25px;font-family:'Liberation Mono', monospace;-webkit-text-stroke:0.3px currentColor;"><span style="color:#cccccc">  </span><span style="color:#dcdcaa">@Post</span><span style="color:#da70d6">(</span><span style="color:#ce9178">&#x27;/register&#x27;</span><span style="color:#da70d6">)</span></div>
<div class="t" style="left:561.4px;top:447.07px;font-size:19.25px;color:#6e7681;font-family:'Liberation Mono', monospace;">10</div>
<div class="t" style="left:623.6px;top:447.07px;font-size:19.25px;font-family:'Liberation Mono', monospace;-webkit-text-stroke:0.3px currentColor;"><span style="color:#cccccc">  </span><span style="color:#dcdcaa">register</span><span style="color:#da70d6">(</span><span style="color:#dcdcaa">@Body</span><span style="color:#179fff">()</span><span style="color:#cccccc"> </span><span style="color:#9cdcfe">createUserDto</span><span style="color:#cccccc">: </span><span style="color:#4ec9b0">CreateUserDto</span><span style="color:#da70d6">)</span><span style="color:#cccccc"> </span><span style="color:#da70d6">{</span></div>
<div class="t" style="left:561.4px;top:475.57px;font-size:19.25px;color:#6e7681;font-family:'Liberation Mono', monospace;">11</div>
<div class="t" style="left:623.6px;top:475.57px;font-size:19.25px;font-family:'Liberation Mono', monospace;-webkit-text-stroke:0.3px currentColor;"><span style="color:#cccccc">    </span><span style="color:#c586c0">return</span><span style="color:#cccccc"> </span><span style="color:#569cd6">this</span><span style="color:#cccccc">.</span><span style="color:#9cdcfe">authService</span><span style="color:#cccccc">.</span><span style="color:#dcdcaa">register</span><span style="color:#179fff">(</span><span style="color:#9cdcfe">createUserDto</span><span style="color:#179fff">)</span><span style="color:#cccccc">;</span></div>
<div class="t" style="left:561.4px;top:504.07px;font-size:19.25px;color:#6e7681;font-family:'Liberation Mono', monospace;">12</div>
<div class="t" style="left:623.6px;top:504.07px;font-size:19.25px;font-family:'Liberation Mono', monospace;-webkit-text-stroke:0.3px currentColor;"><span style="color:#cccccc">  </span><span style="color:#da70d6">}</span></div>
<div class="t" style="left:561.4px;top:532.57px;font-size:19.25px;color:#cccccc;font-family:'Liberation Mono', monospace;">13</div>
<div class="t" style="left:646.2px;top:560.08px;font-size:16.6px;color:#999999;letter-spacing:0.757px;">Qodo: Test this method</div>
<div class="t" style="left:561.4px;top:584.77px;font-size:19.25px;color:#6e7681;font-family:'Liberation Mono', monospace;">14</div>
<div class="t" style="left:623.6px;top:584.77px;font-size:19.25px;font-family:'Liberation Mono', monospace;-webkit-text-stroke:0.3px currentColor;"><span style="color:#cccccc">  </span><span style="color:#dcdcaa">@Post</span><span style="color:#da70d6">(</span><span style="color:#ce9178">&#x27;/login&#x27;</span><span style="color:#da70d6">)</span></div>
<div class="t" style="left:551.6px;top:635.10px;font-size:16.8px;color:#9d9d9d;transform:scaleX(0.8674);transform-origin:0 0;">PROBLEMS</div>
<div class="t" style="left:667.8px;top:635.10px;font-size:16.8px;color:#9d9d9d;transform:scaleX(0.9014);transform-origin:0 0;">OUTPUT</div>
<div class="t" style="left:766.3px;top:635.10px;font-size:16.8px;color:#9d9d9d;transform:scaleX(0.8763);transform-origin:0 0;">DEBUG CONSOLE</div>
<div class="t" style="left:930.4px;top:635.10px;font-size:16.8px;color:#e7e7e7;transform:scaleX(0.9086);transform-origin:0 0;">TERMINAL</div>
<div class="t" style="left:1043.4px;top:635.10px;font-size:16.8px;color:#9d9d9d;transform:scaleX(0.8311);transform-origin:0 0;">PORTS</div>
<div class="a" style="left:927.8px;top:659px;width:82px;height:2px;background:#0078d4;"></div>
<svg class="a" style="left:1550px;top:630px;" width="28" height="28" viewBox="0 0 28 28"><rect x="3.4" y="3.6" width="20.6" height="19.8" rx="3" fill="none" stroke="#cccccc" stroke-width="1.6"/><path d="M7.6 9.4 L11.2 12.6 L7.6 15.8 M12.6 18 H19.4" fill="none" stroke="#cccccc" stroke-width="1.6"/></svg>
<div class="t" style="left:1581.4px;top:633.77px;font-size:18.6px;color:#cccccc;letter-spacing:-0.629px;">pnpm</div>
<svg class="a" style="left:1637px;top:630px;" width="28" height="28" viewBox="0 0 28 28"><path d="M13.8 3.8 V23.6 M3.8 13.7 H23.6" stroke="#cccccc" stroke-width="1.7"/></svg>
<svg class="a" style="left:1667px;top:636px;" width="18" height="14" viewBox="0 0 18 14"><path d="M3.6 4 L9 9.4 L14.4 4" fill="none" stroke="#cccccc" stroke-width="1.5"/></svg>
<svg class="a" style="left:1697px;top:630px;" width="28" height="28" viewBox="0 0 28 28"><rect x="3" y="3.4" width="20.6" height="20.6" rx="3" fill="none" stroke="#cccccc" stroke-width="1.6"/><path d="M13.3 3.4 V24" stroke="#cccccc" stroke-width="1.6"/></svg>
<svg class="a" style="left:1736px;top:629px;" width="28" height="30" viewBox="0 0 28 30"><path d="M3.4 7.4 H24.6 M9.6 7.4 V4.4 Q9.6 3 11 3 H17 Q18.4 3 18.4 4.4 V7.4 M6.2 7.4 L7.4 23.4 Q7.6 25.4 9.6 25.4 H18.4 Q20.4 25.4 20.6 23.4 L21.8 7.4 M11.6 11.2 V21.4 M16.4 11.2 V21.4" fill="none" stroke="#cccccc" stroke-width="1.6"/></svg>
<div class="a" style="left:1779.6000000000001px;top:642.6px;width:3.2px;height:3.2px;background:#cccccc;border-radius:50%;"></div>
<div class="a" style="left:1786.4px;top:642.6px;width:3.2px;height:3.2px;background:#cccccc;border-radius:50%;"></div>
<div class="a" style="left:1793.2px;top:642.6px;width:3.2px;height:3.2px;background:#cccccc;border-radius:50%;"></div>
<div class="a" style="left:1818px;top:633px;width:1px;height:22px;background:#3c3c3c;"></div>
<svg class="a" style="left:1833px;top:630px;" width="28" height="28" viewBox="0 0 28 28"><path d="M4.4 10.4 V5.2 H9.6 M17.8 5.2 H23 V10.4 M23 17.6 V22.8 H17.8 M9.6 22.8 H4.4 V17.6" fill="none" stroke="#cccccc" stroke-width="1.6"/></svg>
<svg class="a" style="left:1872px;top:630px;" width="28" height="28" viewBox="0 0 28 28"><path d="M5.8 5.6 L21.8 21.6 M21.8 5.6 L5.8 21.6" stroke="#cccccc" stroke-width="1.6"/></svg>
<div class="a" style="left:1899px;top:681px;width:1px;height:365px;background:#0f0f0f;"></div>
<div class="a" style="left:1899px;top:681px;width:21px;height:1px;background:#0f0f0f;"></div>
<div class="a" style="left:1900px;top:682px;width:6px;height:4px;background:#5a5a5a;"></div>
<div class="a" style="left:1900px;top:803.4px;width:20px;height:44px;background:#434343;"></div>
<div class="t" style="left:552px;top:684.44px;font-size:18.33px;font-family:'Liberation Mono', monospace;-webkit-text-stroke:0.25px currentColor;"><span style="color:#cccccc">[</span><span style="color:#8c8c8c">09.17.49</span><span style="color:#cccccc">]</span><span style="color:#cccccc"> Starting compilation in watch mode...</span></div>
<div class="a" style="left:522px;top:705px;width:1376px;height:4px;background:linear-gradient(#080808,rgba(0,0,0,0));"></div>
<div class="t" style="left:552px;top:714.14px;font-size:18.33px;font-family:'Liberation Mono', monospace;-webkit-text-stroke:0.25px currentColor;"><span style="color:#0dbc79">[Nest] 7616  - </span><span style="color:#cccccc">15/03/2026, 09.18.05</span><span style="color:#0dbc79">     LOG </span><span style="color:#e5e510">[RouterExplorer] </span><span style="color:#0dbc79">Mapped {/assignment/:id, PATCH} route </span><span style="color:#e5e510;font-weight:bold">+3ms</span></div>
<div class="t" style="left:552px;top:740.14px;font-size:18.33px;font-family:'Liberation Mono', monospace;-webkit-text-stroke:0.25px currentColor;"><span style="color:#0dbc79">[Nest] 7616  - </span><span style="color:#cccccc">15/03/2026, 09.18.05</span><span style="color:#0dbc79">     LOG </span><span style="color:#e5e510">[RouterExplorer] </span><span style="color:#0dbc79">Mapped {/assignment/:id, DELETE} route </span><span style="color:#e5e510;font-weight:bold">+1ms</span></div>
<div class="t" style="left:552px;top:766.14px;font-size:18.33px;font-family:'Liberation Mono', monospace;-webkit-text-stroke:0.25px currentColor;"><span style="color:#0dbc79">[Nest] 7616  - </span><span style="color:#cccccc">15/03/2026, 09.18.05</span><span style="color:#0dbc79">     LOG </span><span style="color:#e5e510">[RoutesResolver] </span><span style="color:#0dbc79">EnrollmentController {/enrollment}: </span><span style="color:#e5e510;font-weight:bold">+1ms</span></div>
<div class="t" style="left:552px;top:792.14px;font-size:18.33px;font-family:'Liberation Mono', monospace;-webkit-text-stroke:0.25px currentColor;"><span style="color:#0dbc79">[Nest] 7616  - </span><span style="color:#cccccc">15/03/2026, 09.18.05</span><span style="color:#0dbc79">     LOG </span><span style="color:#e5e510">[RouterExplorer] </span><span style="color:#0dbc79">Mapped {/enrollment, POST} route </span><span style="color:#e5e510;font-weight:bold">+3ms</span></div>
<div class="t" style="left:552px;top:818.14px;font-size:18.33px;font-family:'Liberation Mono', monospace;-webkit-text-stroke:0.25px currentColor;"><span style="color:#0dbc79">[Nest] 7616  - </span><span style="color:#cccccc">15/03/2026, 09.18.05</span><span style="color:#0dbc79">     LOG </span><span style="color:#e5e510">[RouterExplorer] </span><span style="color:#0dbc79">Mapped {/enrollment, GET} route </span><span style="color:#e5e510;font-weight:bold">+2ms</span></div>
<div class="t" style="left:552px;top:844.14px;font-size:18.33px;font-family:'Liberation Mono', monospace;-webkit-text-stroke:0.25px currentColor;"><span style="color:#0dbc79">[Nest] 7616  - </span><span style="color:#cccccc">15/03/2026, 09.18.05</span><span style="color:#0dbc79">     LOG </span><span style="color:#e5e510">[RouterExplorer] </span><span style="color:#0dbc79">Mapped {/enrollment/:id, GET} route </span><span style="color:#e5e510;font-weight:bold">+2ms</span></div>
<div class="t" style="left:552px;top:870.14px;font-size:18.33px;font-family:'Liberation Mono', monospace;-webkit-text-stroke:0.25px currentColor;"><span style="color:#0dbc79">[Nest] 7616  - </span><span style="color:#cccccc">15/03/2026, 09.18.05</span><span style="color:#0dbc79">     LOG </span><span style="color:#e5e510">[RouterExplorer] </span><span style="color:#0dbc79">Mapped {/enrollment/:id, PATCH} route </span><span style="color:#e5e510;font-weight:bold">+1ms</span></div>
<div class="t" style="left:552px;top:896.14px;font-size:18.33px;font-family:'Liberation Mono', monospace;-webkit-text-stroke:0.25px currentColor;"><span style="color:#0dbc79">[Nest] 7616  - </span><span style="color:#cccccc">15/03/2026, 09.18.05</span><span style="color:#0dbc79">     LOG </span><span style="color:#e5e510">[RouterExplorer] </span><span style="color:#0dbc79">Mapped {/enrollment/:id, DELETE} route </span><span style="color:#e5e510;font-weight:bold">+2ms</span></div>
<div class="t" style="left:552px;top:922.14px;font-size:18.33px;font-family:'Liberation Mono', monospace;-webkit-text-stroke:0.25px currentColor;"><span style="color:#0dbc79">[Nest] 7616  - </span><span style="color:#cccccc">15/03/2026, 09.18.05</span><span style="color:#0dbc79">     LOG </span><span style="color:#e5e510">[RoutesResolver] </span><span style="color:#0dbc79">AuthController {/auth}: </span><span style="color:#e5e510;font-weight:bold">+1ms</span></div>
<div class="t" style="left:552px;top:948.14px;font-size:18.33px;font-family:'Liberation Mono', monospace;-webkit-text-stroke:0.25px currentColor;"><span style="color:#0dbc79">[Nest] 7616  - </span><span style="color:#cccccc">15/03/2026, 09.18.05</span><span style="color:#0dbc79">     LOG </span><span style="color:#e5e510">[RouterExplorer] </span><span style="color:#0dbc79">Mapped {/auth/register, POST} route </span><span style="color:#e5e510;font-weight:bold">+4ms</span></div>
<div class="t" style="left:552px;top:974.14px;font-size:18.33px;font-family:'Liberation Mono', monospace;-webkit-text-stroke:0.25px currentColor;"><span style="color:#0dbc79">[Nest] 7616  - </span><span style="color:#cccccc">15/03/2026, 09.18.05</span><span style="color:#0dbc79">     LOG </span><span style="color:#e5e510">[RouterExplorer] </span><span style="color:#0dbc79">Mapped {/auth/login, POST} route </span><span style="color:#e5e510;font-weight:bold">+1ms</span></div>
<div class="t" style="left:552px;top:1000.14px;font-size:18.33px;font-family:'Liberation Mono', monospace;-webkit-text-stroke:0.25px currentColor;"><span style="color:#0dbc79">[Nest] 7616  - </span><span style="color:#cccccc">15/03/2026, 09.18.05</span><span style="color:#0dbc79">     LOG </span><span style="color:#e5e510">[RouterExplorer] </span><span style="color:#0dbc79">Mapped {/auth/refresh, POST} route </span><span style="color:#e5e510;font-weight:bold">+2ms</span></div>
<div class="t" style="left:552px;top:1026.14px;font-size:18.33px;font-family:'Liberation Mono', monospace;-webkit-text-stroke:0.25px currentColor;"><span style="color:#0dbc79">[Nest] 7616  - </span><span style="color:#cccccc">15/03/2026, 09.18.05</span><span style="color:#0dbc79">     LOG </span><span style="color:#e5e510">[NestApplication] </span><span style="color:#0dbc79">Nest application successfully started </span><span style="color:#e5e510;font-weight:bold">+7ms</span></div>
<svg class="a" style="left:16px;top:1048px;" width="24" height="26" viewBox="0 0 24 26"><path d="M3.2 10 L10.25 15.8 L3.2 22.5 M18.6 3.3 L11.5 10 L18.6 16.7" fill="none" stroke="#cccccc" stroke-width="1.6"/></svg>
<svg class="a" style="left:62px;top:1048px;" width="26" height="28" viewBox="0 0 26 28"><circle cx="7.6" cy="5.8" r="3.1" fill="none" stroke="#cccccc" stroke-width="1.6"/><circle cx="7.6" cy="22" r="3.1" fill="none" stroke="#cccccc" stroke-width="1.6"/><circle cx="18.4" cy="10" r="3.1" fill="none" stroke="#cccccc" stroke-width="1.6"/><path d="M7.6 8.9 V18.9 M7.6 16 H14.4 Q18.4 16 18.4 13.1" fill="none" stroke="#cccccc" stroke-width="1.6"/></svg>
<div class="t" style="left:91.8px;top:1051.67px;font-size:18.6px;color:#cccccc;letter-spacing:-0.203px;">main</div>
<svg class="a" style="left:139px;top:1048px;" width="28" height="28" viewBox="0 0 28 28"><path d="M12.6 5.2 A9 9 0 0 0 9.4 22.4 M16.2 5.8 A9 9 0 0 1 13.6 23.2" fill="none" stroke="#cccccc" stroke-width="1.6"/><path d="M10.2 1.8 L13.4 5.2 L10.4 8.6 M16.4 19.8 L13.2 23.2 L16.2 26.4" fill="none" stroke="#cccccc" stroke-width="1.6"/></svg>
<svg class="a" style="left:187px;top:1049px;" width="26" height="26" viewBox="0 0 26 26"><circle cx="13" cy="13" r="9.6" fill="none" stroke="#cccccc" stroke-width="1.6"/><path d="M9.2 9.2 L16.8 16.8 M16.8 9.2 L9.2 16.8" stroke="#cccccc" stroke-width="1.6"/></svg>
<div class="t" style="left:216.4px;top:1051.67px;font-size:18.6px;color:#cccccc;letter-spacing:0.656px;">0</div>
<svg class="a" style="left:231px;top:1048.4px;" width="26" height="26" viewBox="0 0 26 26"><path d="M13 3.6 L23 21.6 H3 Z" fill="none" stroke="#cccccc" stroke-width="1.6" stroke-linejoin="round"/><path d="M13 9.6 V15.4 M13 17.4 V19.4" stroke="#cccccc" stroke-width="1.7"/></svg>
<div class="t" style="left:259.4px;top:1051.67px;font-size:18.6px;color:#cccccc;letter-spacing:0.656px;">0</div>
<svg class="a" style="left:291px;top:1047.4px;" width="28" height="28" viewBox="0 0 28 28"><path d="M14.6 5.2 H6.4 Q4 5.2 4 7.6 V21.6 Q4 24 6.4 24 H20 Q22.4 24 22.4 21.6 V17.6" fill="none" stroke="#cccccc" stroke-width="1.6"/><path d="M8.6 19.2 Q9.6 11.6 18.4 11.6 V15.6 L25 9.6 L18.4 3.6 V7.6 Q9 7.8 8.6 19.2 Z" fill="none" stroke="#cccccc" stroke-width="1.6" stroke-linejoin="round"/></svg>
<div class="t" style="left:321.4px;top:1051.67px;font-size:18.6px;color:#cccccc;letter-spacing:-0.741px;">Live Share</div>
<div class="t" style="left:426.4px;top:1051.67px;font-size:18.6px;color:#cccccc;letter-spacing:-0.715px;">{..} : 99</div>
<svg class="a" style="left:851px;top:1048px;" width="18" height="28" viewBox="0 0 18 28"><circle cx="9" cy="13.6" r="4.8" fill="none" stroke="#cccccc" stroke-width="1.6"/><path d="M9 3 V8.8 M9 18.4 V25" stroke="#cccccc" stroke-width="1.6"/></svg>
<div class="t" style="left:876.4px;top:1051.67px;font-size:18.6px;color:#cccccc;letter-spacing:-0.310px;">Perhisi Ardhian (1 month ago)</div>
<div class="t" style="left:1137.4px;top:1051.67px;font-size:18.6px;color:#cccccc;letter-spacing:-0.607px;">Ln 13, Col 1</div>
<div class="t" style="left:1254.2px;top:1051.67px;font-size:18.6px;color:#cccccc;letter-spacing:-1.023px;">Spaces: 2</div>
<div class="t" style="left:1351.4px;top:1051.67px;font-size:18.6px;color:#cccccc;letter-spacing:-0.938px;">UTF-8</div>
<div class="t" style="left:1425px;top:1051.67px;font-size:18.6px;color:#cccccc;letter-spacing:1.802px;">{ }</div>
<div class="t" style="left:1456.2px;top:1051.67px;font-size:18.6px;color:#cccccc;letter-spacing:-0.584px;">TypeScript</div>
<svg class="a" style="left:1559px;top:1049px;" width="30" height="28" viewBox="0 0 30 28"><g transform="translate(1.6 0.4) scale(0.9)">
<rect x="4.2" y="3.4" width="9.4" height="8" rx="3.6" fill="none" stroke="#cccccc" stroke-width="3"/>
<rect x="16.4" y="3.4" width="9.4" height="8" rx="3.6" fill="none" stroke="#cccccc" stroke-width="3"/>
<path d="M3.4 11.6 Q2.4 13 2.4 15.4 V18.6 Q2.4 20.6 4.4 21.8 Q9 24.6 15 24.6 Q21 24.6 25.6 21.8 Q27.6 20.6 27.6 18.6 V15.4 Q27.6 13 26.6 11.6" fill="none" stroke="#cccccc" stroke-width="2.8"/>
<path d="M4.2 13.2 H25.8 V19.4 Q21 22.8 15 22.8 Q9 22.8 4.2 19.4 Z" fill="#cccccc"/>
<path d="M11.2 15.2 V19.6 M18.8 15.2 V19.6" stroke="#181818" stroke-width="3"/></g></svg>
<svg class="a" style="left:1608px;top:1049px;" width="30" height="30" viewBox="0 0 30 30"><path d="M15 1.8 L26.6 8.4 V21.6 L15 28.2 L3.4 21.6 V8.4 Z" fill="#cccccc"/>
<g transform="translate(-1 -1.6) scale(0.8)"><path d="M16.9 15.6 L10.4 23.1 H20.9 M16.7 15.6 V26.2" fill="none" stroke="#181818" stroke-width="2.1"/>
<path d="M18 12.8 Q19.6 10.6 22 11 Q24.6 11.6 24 14.2 Q23.4 16 19.2 20.2 H28" fill="none" stroke="#181818" stroke-width="2.1"/>
<path d="M28.2 21.6 Q26.2 20.2 23.8 21 Q20.8 22.4 21 25.8 Q21.2 29.6 24.6 29.8 Q26.8 29.9 28.2 28.6" fill="none" stroke="#181818" stroke-width="2.1"/></g></svg>
<svg class="a" style="left:1657px;top:1048px;" width="28" height="28" viewBox="0 0 28 28"><circle cx="14" cy="14" r="2.2" fill="#cccccc"/><path d="M9.6 9.4 Q6.4 14 9.6 18.6 M18.4 9.4 Q21.6 14 18.4 18.6 M6 6.2 Q0.8 14 6 21.8 M22 6.2 Q27.2 14 22 21.8" fill="none" stroke="#cccccc" stroke-width="1.6"/></svg>
<div class="t" style="left:1686.8px;top:1051.67px;font-size:18.6px;color:#cccccc;letter-spacing:-0.585px;">Go Live</div>
<svg class="a" style="left:1769px;top:1050px;" width="28" height="28" viewBox="0 0 28 28"><path d="M2.6 12.6 L7.4 17.4 L22.4 4.4 M10 16.8 L24.8 6.2 M7.4 17.4 L9.6 16.8" fill="none" stroke="#cccccc" stroke-width="1.8" stroke-linejoin="round"/></svg>
<div class="t" style="left:1798.8px;top:1051.67px;font-size:18.6px;color:#cccccc;letter-spacing:-0.117px;">Prettier</div>
<svg class="a" style="left:1881px;top:1050px;" width="26" height="28" viewBox="0 0 26 28"><path d="M13 3.6 Q6.2 3.6 6.2 10.6 V17.2 L3.8 21 H22.2 L19.8 17.2 V10.6 Q19.8 3.6 13 3.6 Z" fill="none" stroke="#cccccc" stroke-width="1.6" stroke-linejoin="round"/><path d="M10.2 23.6 Q13 26.4 15.8 23.6" fill="none" stroke="#cccccc" stroke-width="1.6"/></svg>
</body></html>
